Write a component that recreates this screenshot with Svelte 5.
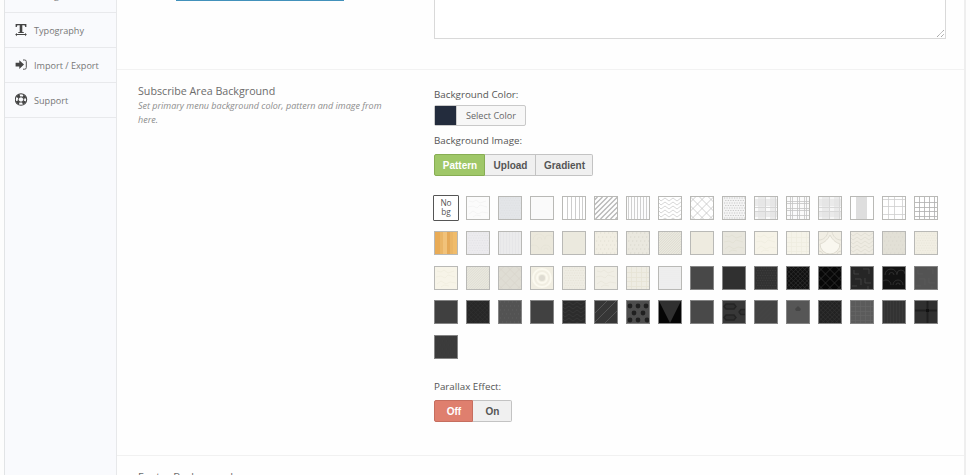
<script>
  const lines = (step, dir) => {
    let d = '';
    for (let p = step / 2; p < 48; p += step) {
      if (dir === 'v') d += `M${p} 0V22`;
      if (dir === 'h') d += `M0 ${p}H22`;
      if (dir === 'u') d += `M${p} 0L${p - 22} 22`;
      if (dir === 'd') d += `M${22 - p} 0L${44 - p} 22`;
    }
    return d;
  };
  const waves = (step) => {
    let d = '';
    for (let y = 2; y < 24; y += step) d += `M0 ${y}l2 2l4 -3l4 3l4 -3l4 3l4 -3`;
    return d;
  };
  const speckle = (step) => {
    let d = '';
    for (let y = 1; y < 22; y += step)
      for (let x = 1 + (((y - 1) / step) % 2) * (step / 2); x < 22; x += step) d += `M${x} ${y}h1.2`;
    return d;
  };
  const kinds = {
    plain: '',
    stripes: lines(3, 'v'),
    wide: 'M4.5 0V22M8.5 0V22M12.5 0V22M16.5 0V22M19.5 0V22',
    diag: lines(5, 'u'),
    fine: lines(2.5, 'u'),
    waves: waves(4),
    diamond: lines(9, 'u') + lines(9, 'd'),
    mesh: lines(4.5, 'u') + lines(4.5, 'd'),
    dots: speckle(2.5),
    grain: speckle(4),
    grid: 'M4.5 0V22M9.5 0V22M14.5 0V22M19.5 0V22M0 5.5H22M0 10.5H22M0 14.5H22M0 19.5H22',
    loose: 'M5.5 0V22M11.5 0V22M19.5 0V22M0 2.5H22M0 9.5H22M0 17.5H22',
    double: 'M3.5 0V22M5.5 0V22M10.5 0V22M12.5 0V22M17.5 0V22M19.5 0V22M0 4.5H22M0 6.5H22M0 11.5H22M0 13.5H22M0 18.5H22',
    weave: lines(2, 'v') + lines(2, 'h'),
    scribble: 'M2 4l4 1l3 -2l4 3l6 -2M1 10l5 -1l4 2l3 -3l7 2M2 17l4 -3l5 3l4 -2l6 1M6 20l3 -2l5 1',
    slash: 'M0 12L12 0M-1 22L21 0M10 22L22 10',
    hooks: 'M3 3v4h5M12 2h6v5M4 12h6v6M14 11v5h6M1 19h5M17 19v3',
    rings: 'M2 8a6 6 0 0 1 12 0M6 8a2.5 2.5 0 0 1 5 0M10 18a5 5 0 0 1 10 0M13 18a2 2 0 0 1 4 0M-2 18a5 5 0 0 1 10 0M14 7a4 4 0 0 1 8 0'
  };
  const L = '#eeece3';
  const swatches = [
    ['#fff', 'none'],
    ['#fbfbfb', 'scribble', '#f3f3f3'], ['#e3e5e8', 'dots', '#dddfe2'], ['#fafafa', 'plain'],
    ['#fff', 'wide', '#c0c0c0'], ['#fff', 'diag', '#b8b8b8', 1.4], ['#fdfdfd', 'stripes', '#c4c4c4'],
    ['#fff', 'waves', '#cdcdcd'], ['#fff', 'diamond', '#c4c4c4'], ['#f4f4f4', 'dots', '#bdbdbd'],
    ['#fbfbfb', 'plaid', '#d6d6d6'], ['#fbfbfb', 'double', '#c4c4c4'], ['#f6f6f6', 'plaid', '#d8d8d8'],
    ['#fff', 'band', '#dedede'], ['#fff', 'loose', '#cecece'], ['#fff', 'grid', '#adadad'],

    ['#eab566', 'wood'], ['#ecebee', 'dots', '#e2e1e5'], ['#ebebec', 'stripes', '#e5e5e7'],
    ['#ebe8dc', 'rings', '#e6e3d7'], ['#ebe9de', 'plain'], ['#f1eee3', 'grain', '#dedbce'],
    ['#eae8df', 'grain', '#d5d3c7'], ['#eceae0', 'fine', '#d9d7cc'], ['#eeebe0', 'plain'],
    ['#e8e6dd', 'scribble', '#e1dfd3'], ['#f6f3e8', 'scribble', '#f0eddf'], ['#f5f3e9', 'grid', '#efecdf'],
    ['#f1eee4', 'scallop', '#dfdcd1'], ['#eeebe2', 'waves', '#e0ddd3'], ['#e2e0d6', 'grain', '#d8d6cc'],
    ['#f1eee3', 'dots', '#e7e4d8'],

    ['#f7f4e8', 'scribble', '#f0edde'], ['#e9e8df', 'fine', '#dddcd1'], ['#dfddd4', 'diamond', '#d8d6cb'],
    ['#f1eee2', 'target', '#fbf9ef'], [L, 'dots', '#e5e2d6'], ['#f0eee5', 'scribble', '#e9e6da'],
    [L, 'grid', '#e6e3d5'], ['#f1f1f1', 'weave', '#ececec'], ['#484848', 'plain'], ['#303030', 'plain'],
    ['#323232', 'dots', '#414141'], ['#111', 'mesh', '#303030'], ['#080808', 'diamond', '#343434'],
    ['#262626', 'hooks', '#464646'], ['#121212', 'rings', '#353535'], ['#535353', 'hooks', '#5a5a5a'],

    ['#404040', 'plain'], ['#272727', 'mesh', '#313131'], ['#535353', 'grain', '#626262'],
    ['#414141', 'plain'], ['#2c2c2c', 'waves', '#3a3a3a'], ['#363636', 'slash', '#5c5c5c'],
    ['#4d4d4d', 'balls', '#202020'], ['#050505', 'vee', '#303030'], ['#474747', 'weave', '#4b4b4b'],
    ['#383838', 'hex', '#242424'], ['#434343', 'diag', '#484848'], ['#565656', 'spot', '#454545'],
    ['#222', 'mesh', '#343434'], ['#5b5b5b', 'grid', '#646464'], ['#333', 'stripes', '#3b3b3b'],
    ['#303030', 'cross', '#111'],

    ['#3b3b3b', 'grain', '#404040']
  ];
</script>

<div class="page">
  <aside>
    <div class="item first"><span class="label">Background</span></div>
    <div class="item">
      <svg class="ic" viewBox="0 0 14 14"><path d="M.6 1h10.8v3.1h-1.100L9.600 2.200H7.300v6.700l1.600.3v.9H3.100v-.9l1.600-.3V2.200H2.400L1.700 4.100H.600z" /><path d="M1.900 10L.2 11.600L1.900 13.200v-1.100h8.200v1.100l1.700-1.600L10.100 10v1.100H1.900z" /></svg>
      <span class="label">Typography</span>
    </div>
    <div class="item">
      <svg class="ic" viewBox="0 0 14 14"><path d="M.6 4.700h3.700V2.200L9 6.600L4.300 11V8.500H.6z" /><path d="M8 2h1.700a1.600 1.600 0 0 1 1.600 1.600v6a1.600 1.600 0 0 1-1.600 1.600H8" fill="none" stroke="#555" stroke-width="1" /></svg>
      <span class="label">Import / Export</span>
    </div>
    <div class="item">
      <svg class="ic" viewBox="0 0 14 14"><g fill="none" stroke="#444"><circle cx="6" cy="6.500" r="5.700" stroke-width="1.100" /><circle cx="6" cy="6.500" r="2.700" stroke-width="1" /><circle cx="6" cy="6.500" r="4.100" stroke-width="2.600" stroke-dasharray="3.200 3.240" stroke-dashoffset="-1.600" /></g></svg>
      <span class="label">Support</span>
    </div>
  </aside>

  <main>
    <section class="top">
      <div class="link"></div>
      <div class="area"><svg viewBox="0 0 8 8"><path d="M0 7L7 0M4 7L7 4" stroke="#999" fill="none" stroke-dasharray="1.2 .5" /></svg></div>
    </section>

    <section class="option">
      <div class="info">
        <h3>Subscribe Area Background</h3>
        <p>Set primary menu background color, pattern and image from here.</p>
      </div>
      <div class="fields">
        <div class="name">Background Color:</div>
        <button class="picker"><i></i><span>Select Color</span></button>
        <div class="name image">Background Image:</div>
        <div class="group">
          <button class="green" style:width="51px">Pattern</button><button style:width="51px">Upload</button><button style:width="57px">Gradient</button>
        </div>
        <div class="swatches">
          {#each swatches as [bg, kind, ink, weight = 0.8]}
            {#if kind === 'none'}
              <div class="nobg">No<br />bg</div>
            {:else}
              <svg class="sw" class:dark={bg < '#6'} viewBox="0 0 22 22" style:background={bg} stroke={ink} fill="none">
                {#if kind === 'wood'}
                  <rect width="5" height="22" fill="#e9ab55" stroke="none" /><rect x="8" width="4" height="22" fill="#f1c27a" stroke="none" /><rect x="12" width="3" height="22" fill="#e5a957" stroke="none" /><rect x="18" width="4" height="22" fill="#f0bc6b" stroke="none" />
                {:else if kind === 'band'}
                  <rect x="5" width="11" height="22" fill={ink} stroke="none" />
                {:else if kind === 'plaid'}
                  <g fill={ink} stroke="none" opacity=".65"><rect y="2" width="22" height="7" opacity=".6" /><rect y="15" width="22" height="5" opacity=".6" /><rect x="3" width="7" height="22" opacity=".6" /><rect x="15" width="5" height="22" opacity=".6" /></g>
                  <path d="M10.5 0V22M0 10.5H22M0 14.5H22M20.5 0V22" />
                {:else if kind === 'target'}
                  <circle cx="11" cy="11" r="9" stroke-width="2" /><circle cx="11" cy="11" r="5" stroke-width="2" /><circle cx="11" cy="11" r="3" fill="#dfdcd2" stroke="none" />
                {:else if kind === 'scallop'}
                  <path d="M11 3C8 9 4 11 1 12A10 10 0 0 0 21 12C18 11 14 9 11 3Z" fill="#f9f7ef" /><path d="M0 8C5 8 8 4 9 0M22 8C17 8 14 4 13 0M0 19q3 0 4 3M22 19q-3 0 -4 3" />
                {:else if kind === 'balls'}
                  <g fill={ink} stroke="none">{#each [[3, 5], [11, 5], [19, 5], [7, 12], [16, 12], [3, 19], [11, 19], [20, 19]] as [x, y]}<circle cx={x} cy={y} r="2.4" />{/each}</g>
                {:else if kind === 'vee'}
                  <path d="M0 0H22L11 22Z" fill={ink} stroke="none" />
                {:else if kind === 'hex'}
                  <path d="M3 3h8l2 2.5l-2 2.5h-8l-2 -2.5zM3 14h8l2 2.5l-2 2.5h-8l-2 -2.5zM22 8.500h-4l-2 2.500l2 2.500h4" stroke-width="1.4" fill="#303030" />
                {:else if kind === 'spot'}
                  <path d="M11 5l3 3l-1 2h-4l-1 -2z" fill={ink} stroke="none" />
                {:else if kind === 'cross'}
                  <path d="M0 9.500H22M12.500 0V22" stroke="#202020" stroke-width="2" /><rect x="11" y="8" width="3" height="3" fill={ink} stroke="none" />
                {:else}
                  <path d={kinds[kind]} stroke-width={weight} />
                {/if}
              </svg>
            {/if}
          {/each}
        </div>
        <div class="name parallax">Parallax Effect:</div>
        <div class="group">
          <button class="red" style:width="39px">Off</button><button style:width="39px">On</button>
        </div>
      </div>
    </section>

    <section class="next"><h3>Footer Background</h3></section>
  </main>
</div>

<style>
  :global(body) { margin: 0; background: #fdfdfd; }
  .page { display: flex; width: 970px; height: 475px; overflow: hidden; box-sizing: border-box; padding-left: 4px; font-family: 'Open Sans', sans-serif; background: #fdfdfd; }
  aside { width: 113px; box-sizing: border-box; border-left: 1px solid #e2e4e6; border-right: 1px solid #e7e8ea; background: #f9fafd; flex: none; }
  .item { height: 35px; box-sizing: border-box; border-bottom: 1px solid #e8e9ec; display: flex; align-items: center; padding-left: 10px; }
  .item.first { margin-top: -22px; padding-left: 29px; }
  .ic { width: 14px; height: 14px; margin-right: 5px; fill: #444; flex: none; }
  .label { font-size: 9.1px; line-height: 14px; color: #777; white-space: nowrap; padding-top: 1px; }
  main { width: 847px; flex: none; border-right: 2px solid #eee; background: #fefefe; }
  .top { height: 69px; border-bottom: 1px solid #f2f2f2; display: flex; align-items: flex-start; }
  .link { width: 168px; height: 1px; margin-left: 59px; background: #4291bb; flex: none; }
  .area { width: 510px; height: 38px; margin-left: 90px; border: 1px solid #d9d9d9; border-top: 0; background: #fff; display: flex; justify-content: flex-end; align-items: flex-end; }
  .area svg { width: 8px; height: 8px; }
  .option { height: 385px; border-bottom: 1px solid #f1f1f1; display: flex; }
  .info { width: 260px; padding: 13px 0 0 21px; flex: none; }
  h3 { margin: 0; font-weight: 400; font-size: 10.7px; line-height: 17px; color: #6c6c6c; }
  p { margin: -1px 0 0; font-style: italic; font-size: 9px; line-height: 14px; color: #8d8d8d; }
  .fields { padding: 18px 0 0 36px; }
  .name { font-size: 9.8px; line-height: 14px; color: #555; }
  .picker { display: flex; align-items: center; height: 21px; width: 92px; margin: 3px 0 0; padding: 0; border: 1px solid #c9c9c9; border-radius: 2px; background: #f7f7f7; font: 9.1px/19px 'Open Sans', sans-serif; color: #666; box-sizing: border-box; }
  .picker i { width: 21px; height: 19px; background: #232c3d; flex: none; border-right: 1px solid #ccc; box-sizing: content-box; }
  .picker span { flex: 1; text-align: center; }
  .image { margin-top: 8px; }
  .group { display: flex; margin-top: 6px; }
  .group button { height: 22px; box-sizing: border-box; border: 1px solid #c3c3c3; border-left-width: 0; background: #f0f0f0; padding: 0 0 0 1px; font: bold 10px 'Liberation Sans', Arial, sans-serif; color: #555; }
  .group button:last-child { border-radius: 0 2px 2px 0; }
  .group button.green { background: #9fc768; border: 1px solid #87ad53; color: #fff; border-radius: 2px 0 0 2px; }
  .group button.red { background: #df7f6e; border: 1px solid #c66e5f; color: #fff; border-radius: 2px 0 0 2px; }
  .swatches { display: grid; grid-template-columns: repeat(16, 24px); grid-auto-rows: 24px; column-gap: 8px; row-gap: 10.75px; margin-top: 20px; }
  .sw { width: 24px; height: 24px; box-sizing: border-box; border: 1px solid #b9b9b6; }
  .sw.dark { border-color: #848484; }
  .nobg { box-sizing: border-box; width: 26px; height: 26px; margin: -1px; border: 1px solid #555; border-radius: 1px; background: #fff; color: #555; font-size: 8.3px; line-height: 9px; text-align: center; padding-top: 2px; }
  .parallax { margin-top: 21px; }
  .next { padding: 13px 0 0 21px; }
</style>
